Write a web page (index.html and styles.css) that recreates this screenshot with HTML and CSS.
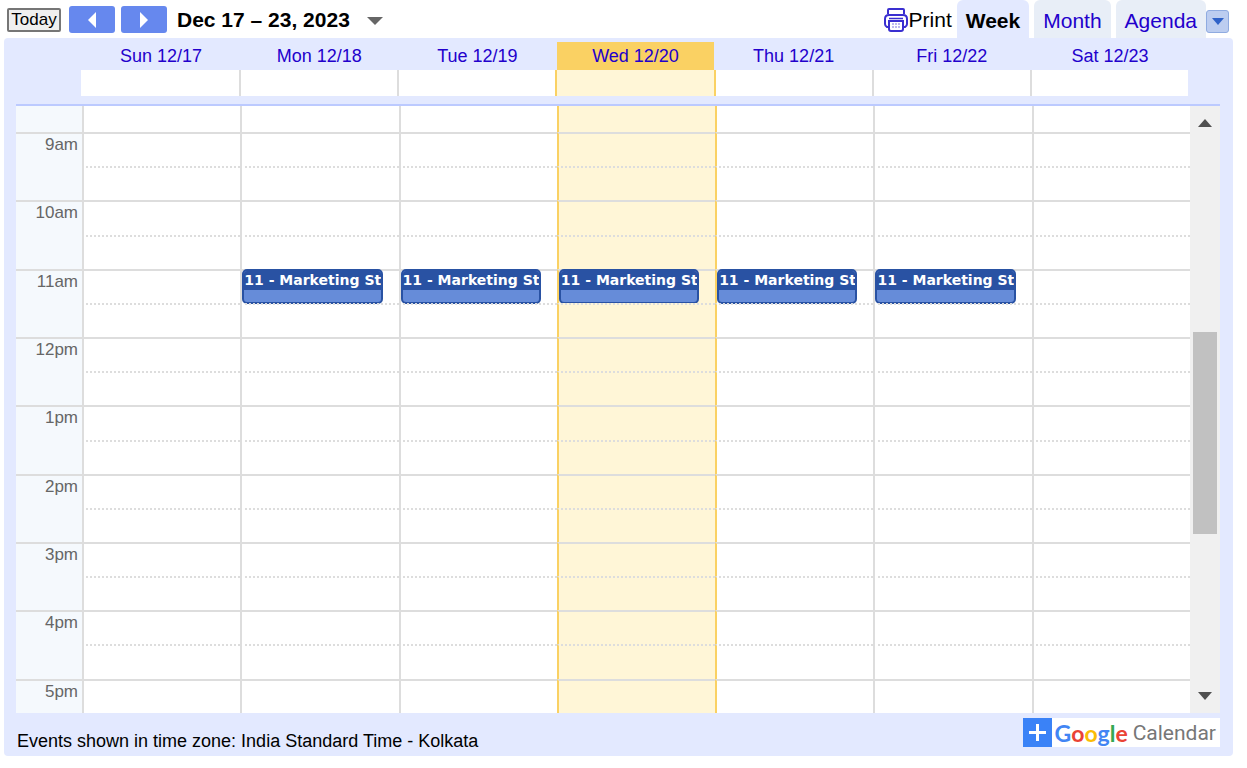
FILE: index.html
```html
<!DOCTYPE html>
<html lang="en">
<head>
  <meta charset="UTF-8">
  <title>Calendar - Week</title>
  <link rel="stylesheet" href="styles.css">
</head>
<body>
  <div class="toolbar">
    <button class="today-btn" type="button">Today</button>
    <button class="nav-btn" type="button" aria-label="Previous week">
      <svg width="10" height="16" viewBox="0 0 10 16"><path d="M9 0v16L1 8z" fill="#fff"/></svg>
    </button>
    <button class="nav-btn" type="button" aria-label="Next week">
      <svg width="10" height="16" viewBox="0 0 10 16"><path d="M1 0v16l8-8z" fill="#fff"/></svg>
    </button>
    <h1>Dec 17 – 23, 2023</h1>
    <button class="date-btn" type="button" aria-label="Choose date">
      <svg width="16" height="8" viewBox="0 0 16 8"><path d="M0 0h16L8 8z" fill="#666"/></svg>
    </button>

    <a class="print" href="#">
      <svg width="26" height="26" viewBox="0 0 26 26" fill="none" stroke="#3a2fd0" stroke-width="2">
        <path d="M5 7V3q0-1 1-1h14q1 0 1 1v4"/>
        <path d="M5 20H4q-2-1-2-3v-5q0-4 4-4h14q4 0 4 4v5q0 2-2 3h-1"/>
        <path d="M6 11.500h14" stroke-width="1.500"/>
        <path d="M6 14h14v8q0 2-2 2H8q-2 0-2-2z" fill="#fff"/>
        <path d="M9 17h2m1 0h2m1 0h2M9 20h2m1 0h2m1 0h2" stroke="#a9a4ea" stroke-width="1.500"/>
      </svg>
      <span>Print</span>
    </a>
    <nav class="tabs">
      <a class="tab active" href="#">Week</a>
      <a class="tab" href="#">Month</a>
      <a class="tab" href="#">Agenda</a>
    </nav>
    <button class="menu-btn" type="button" aria-label="Calendar list">
      <svg width="12" height="7" viewBox="0 0 12 7"><path d="M0 0h12L6 7z" fill="#2f62c8"/></svg>
    </button>
  </div>

  <div class="calendar">
    <table class="days">
      <thead>
        <tr>
          <td class="corner"></td>
          <th><a href="#">Sun 12/17</a></th>
          <th><a href="#">Mon 12/18</a></th>
          <th><a href="#">Tue 12/19</a></th>
          <th class="today"><a href="#">Wed 12/20</a></th>
          <th><a href="#">Thu 12/21</a></th>
          <th><a href="#">Fri 12/22</a></th>
          <th><a href="#">Sat 12/23</a></th>
        </tr>
      </thead>
      <tbody>
        <tr class="all-day">
          <td class="corner"></td>
          <td></td><td></td><td></td><td class="today"></td><td></td><td></td><td></td>
        </tr>
      </tbody>
    </table>

    <div class="scroller">
      <table class="hours">
        <tbody id="hoursBody"></tbody>
      </table>
      <div class="scrollbar">
        <button type="button" aria-label="Scroll up">
          <svg width="14" height="8" viewBox="0 0 14 8"><path d="M0 8h14L7 0z" fill="#505050"/></svg>
        </button>
        <div class="track"><div class="thumb"></div></div>
        <button type="button" aria-label="Scroll down">
          <svg width="14" height="8" viewBox="0 0 14 8"><path d="M0 0h14L7 8z" fill="#505050"/></svg>
        </button>
      </div>
    </div>

    <div class="footer">
      <span>Events shown in time zone: India Standard Time - Kolkata</span>
      <a class="badge" href="#">
        <svg width="29" height="29" viewBox="0 0 29 29"><path d="M0 0h29v29H0z" fill="#3a82f7"/><path d="M14.500 6v17M6 14.500h17" stroke="#fff" stroke-width="3"/></svg>
        <span class="google"><span class="blue">G</span><span class="red">o</span><span class="yellow">o</span><span class="blue">g</span><span class="green">l</span><span class="red">e</span></span>
        <span class="product">Calendar</span>
      </a>
    </div>
  </div>

  <script>
    const hours = ['9am', '10am', '11am', '12pm', '1pm', '2pm', '3pm', '4pm', '5pm'];
    const TODAY = 3;
    const events = { '11am': { days: [1, 2, 3, 4, 5], title: '11 - Marketing St' } };

    function cells(hour) {
      let html = '';
      for (let d = 0; d < 7; d++) {
        const ev = events[hour];
        const box = ev && ev.days.includes(d) ? `<div class="event"><div class="event-title">${ev.title}</div></div>` : '';
        html += `<td class="${d === TODAY ? 'today' : ''}">${box}</td>`;
      }
      return html;
    }

    let rows = `<tr class="first"><th></th>${cells()}</tr>`;
    hours.forEach((hour, i) => {
      const last = i === hours.length - 1;
      rows += `<tr class="hour"><th rowspan="${last ? 1 : 2}">${hour}</th>${cells(hour)}</tr>`;
      if (!last) rows += `<tr class="half">${cells()}</tr>`;
    });
    document.getElementById('hoursBody').innerHTML = rows;
  </script>
</body>
</html>
```

FILE: styles.css
```css
* {
  box-sizing: border-box;
}

body {
  margin: 0 14px 0 4px;
  font-family: Arial, "Liberation Sans", sans-serif;
  font-size: 17px;
  background: #fff;
  color: #000;
}

a {
  color: #2200cc;
  text-decoration: none;
}

button {
  display: flex;
  align-items: center;
  justify-content: center;
  padding: 0;
  border: none;
  background: none;
  font-family: inherit;
  cursor: pointer;
}

svg {
  display: block;
}

.toolbar {
  display: flex;
  align-items: center;
  height: 38px;
  padding: 1px 4px 0 3px;
}

.today-btn {
  width: 54px;
  height: 24px;
  margin-right: 8px;
  border: 2px solid #767676;
  border-radius: 2px;
  background: #efefef;
  font-size: 17px;
  color: #000;
}

.nav-btn {
  width: 46px;
  height: 27px;
  margin-right: 6px;
  border-radius: 3px;
  background: #6688ee;
}

.toolbar h1 {
  margin: 0 17px 0 4px;
  font-size: 21px;
}

.date-btn {
  height: 27px;
  padding-top: 3px;
}

.print {
  display: flex;
  align-items: center;
  margin-left: auto;
  margin-right: 5px;
  font-size: 21px;
  color: #000;
}

.tabs {
  display: flex;
  align-self: stretch;
  gap: 5px;
  margin-top: -1px;
}

.tab {
  padding: 9px 9px 0;
  border-radius: 6px 6px 0 0;
  background: #e8eef7;
  font-size: 21px;
  line-height: 24px;
}

.tab.active {
  background: #e3e9ff;
  font-weight: bold;
  color: #000;
}

.menu-btn {
  width: 23px;
  height: 23px;
  margin-top: 3px;
  border: 1px solid #8fabe0;
  border-radius: 3px;
  background: #bccdf0;
}

.calendar {
  padding: 4px 13px 5px 12px;
  border-radius: 4px;
  background: #e3e9ff;
}

table {
  width: 100%;
  table-layout: fixed;
  border-collapse: separate;
  border-spacing: 0;
}

th, td {
  padding: 0;
  font-weight: normal;
}

.days {
  width: calc(100% - 32px);
  margin-bottom: 8px;
}

.days .corner {
  width: 65px;
  border: none;
  background: none;
}

.days th {
  height: 28px;
  border-left: 2px solid transparent;
  background-clip: padding-box;
  font-size: 18px;
}

.days th.today {
  background-color: #fad163;
}

.all-day td {
  height: 26px;
  border-left: 2px solid #ddd;
  background: #fff;
}

.all-day .corner + td {
  border-left: none;
}

.scroller {
  display: flex;
  border-top: 2px solid #bccaff;
}

.hours {
  flex: 1;
  height: 607px;
  background: #fff;
}

.hours th {
  width: 66px;
  padding: 1px 4px 0 0;
  border-top: 2px solid #ddd;
  background: #f5f9fd;
  color: #666;
  text-align: right;
  vertical-align: top;
}

.hours td {
  position: relative;
  border-left: 2px solid #ddd;
  border-top: 2px solid #ddd;
}

.hours tr {
  height: 34px;
}

.hours .first {
  height: 26px;
}

.hours .first th, .hours .first td {
  border-top: none;
}

.hours .half td {
  border-top-style: dotted;
}

.hours td.today, .all-day td.today {
  border-left-color: #fad163;
  background: #fff6d7;
}

.hours td.today + td, .all-day td.today + td {
  border-left-color: #fad163;
}

/* events sit on top of the grid lines */
.event {
  position: absolute;
  top: -2px;
  left: 0;
  right: 16px;
  height: 35px;
  border: 2px solid #2952a3;
  border-radius: 5px;
  background: #668cd9;
  overflow: hidden;
}

.event-title {
  background: #2952a3;
  color: #fff;
  font-family: Verdana, "DejaVu Sans", sans-serif;
  font-size: 14px;
  font-weight: bold;
  line-height: 19px;
  white-space: nowrap;
}

.scrollbar {
  display: flex;
  flex-direction: column;
  width: 30px;
  background: #f0f0f0;
}

.scrollbar button {
  height: 34px;
}

.track {
  display: grid;
  flex: 1;
  grid-template-rows: 192fr 202fr 145fr;
  padding: 0 3px;
}

.thumb {
  grid-row: 2;
  background: #c1c1c1;
}

.footer {
  display: flex;
  justify-content: space-between;
  align-items: flex-start;
  padding-top: 5px;
}

.footer > span {
  padding: 13px 0 0 1px;
  font-size: 18px;
  line-height: 20px;
}

.badge {
  display: flex;
  align-items: center;
  height: 29px;
  padding-right: 4px;
  background: #fff;
}

.google {
  margin: 0 5px 0 3px;
  font-family: Lato, sans-serif;
  font-size: 23px;
  font-weight: bold;
}

.product {
  font-family: Roboto, sans-serif;
  font-size: 21px;
  color: #777;
}

.blue {
  color: #4285f4;
}

.red {
  color: #ea4335;
}

.yellow {
  color: #fbbc05;
}

.green {
  color: #34a853;
}
```
